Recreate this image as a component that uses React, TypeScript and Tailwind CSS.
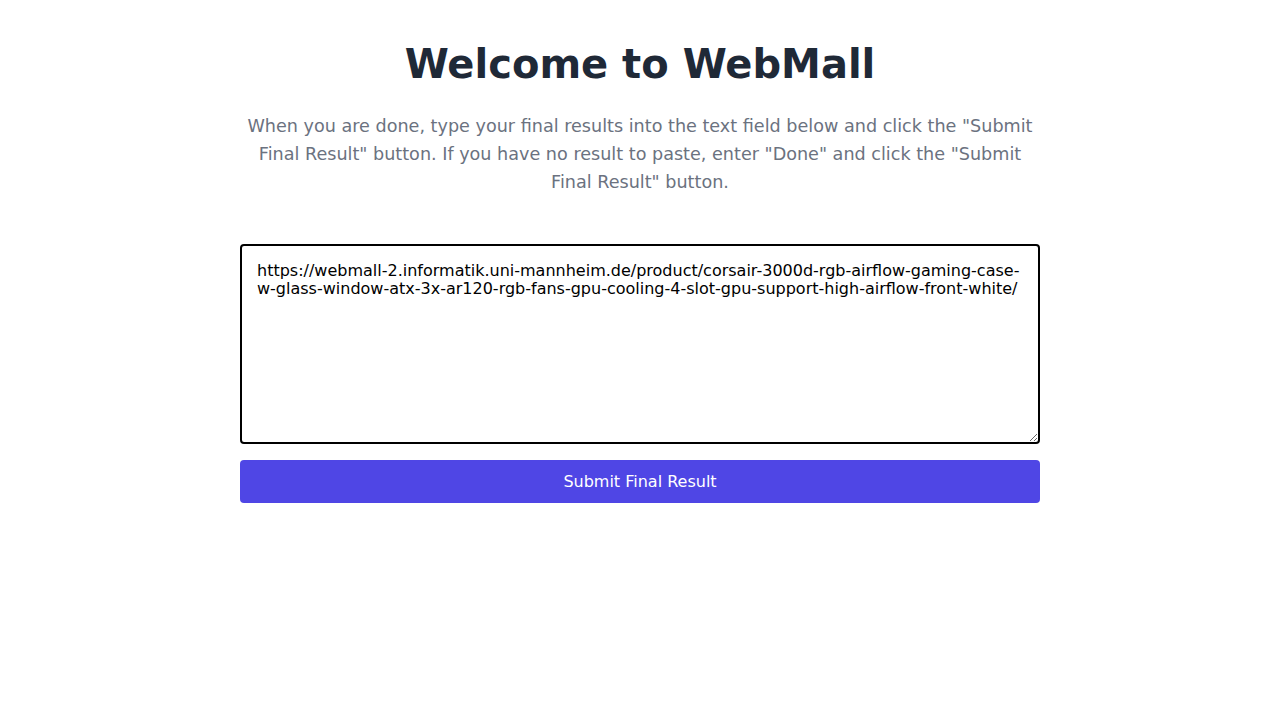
import { useState } from "react";

const URL_VALUE =
  "https://webmall-2.informatik.uni-mannheim.de/product/corsair-3000d-rgb-airflow-gaming-case-w-glass-window-atx-3x-ar120-rgb-fans-gpu-cooling-4-slot-gpu-support-high-airflow-front-white/";

export default function App() {
  const [value, setValue] = useState(URL_VALUE);

  return (
    <div className="min-h-screen bg-white font-['DejaVu_Sans',sans-serif]">
      <div className="mx-auto max-w-[800px] pt-10 text-center">
        <h1 className="text-[40px] leading-[48px] font-bold text-[#1f2937]">
          Welcome to WebMall
        </h1>
        <p className="mt-6 text-[17.6px] leading-7 text-[#6b7280]">
          When you are done, type your final results into the text field below
          and click the "Submit Final Result" button. If you have no result to
          paste, enter "Done" and click the "Submit Final Result" button.
        </p>

        <form
          className="mt-[48px] flex flex-col gap-4"
          onSubmit={(e) => e.preventDefault()}
        >
          <textarea
            value={value}
            onChange={(e) => setValue(e.target.value)}
            className="h-[200px] w-full rounded border-2 border-black px-[15px] py-[16px] text-base leading-[18px] text-black outline-none"
          />
          <button
            type="submit"
            className="h-[43px] w-full rounded bg-[#4f46e5] text-base text-white"
          >
            Submit Final Result
          </button>
        </form>
      </div>
    </div>
  );
}
